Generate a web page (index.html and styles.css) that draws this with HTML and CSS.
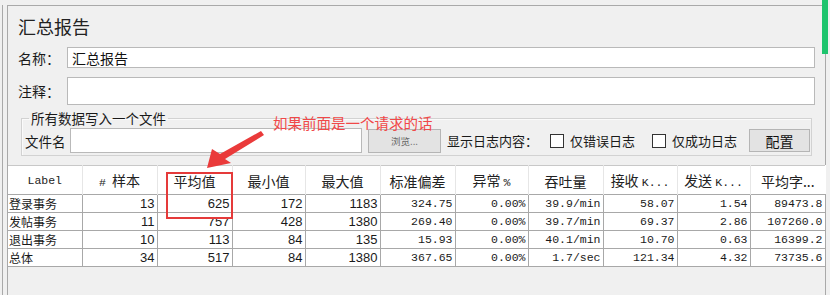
FILE: index.html
```html
<!DOCTYPE html>
<html lang="zh-CN">
<head>
    <meta charset="UTF-8">
    <title>汇总报告</title>
    <link rel="stylesheet" href="styles.css">
</head>
<body>
    <div class="frame">
        <div class="panel">
            <h1 class="title">汇总报告</h1>

            <div class="field-row name-row">
                <label class="field-label">名称：</label>
                <input class="text-input" type="text" value="汇总报告">
            </div>
            <div class="field-row comment-row">
                <label class="field-label">注释：</label>
                <input class="text-input tall" type="text">
            </div>

            <fieldset class="group">
                <legend>所有数据写入一个文件</legend>
                <div class="file-row">
                    <label class="file-label">文件名</label>
                    <input class="file-input" type="text">
                    <button class="btn browse">浏览...</button>
                    <span class="log-label">显示日志内容：</span>
                    <label class="check"><span class="box"></span>仅错误日志</label>
                    <label class="check"><span class="box"></span>仅成功日志</label>
                    <button class="btn config">配置</button>
                </div>
            </fieldset>

            <table class="summary">
                <colgroup>
                    <col style="width: 74px"><col style="width: 75px"><col style="width: 75px">
                    <col style="width: 73px"><col style="width: 75px"><col style="width: 75px">
                    <col style="width: 73px"><col style="width: 75px"><col style="width: 74px">
                    <col style="width: 73px"><col style="width: 75px">
                </colgroup>
                <thead>
                    <tr>
                        <th class="mono">Label</th>
                        <th><span class="mono">#</span>&nbsp; 样本</th>
                        <th>平均值</th>
                        <th>最小值</th>
                        <th>最大值</th>
                        <th>标准偏差</th>
                        <th>异常 <span class="mono">%</span></th>
                        <th>吞吐量</th>
                        <th>接收 <span class="mono">K...</span></th>
                        <th>发送 <span class="mono">K...</span></th>
                        <th>平均字...</th>
                    </tr>
                </thead>
                <tbody>
                    <tr>
                        <td class="name">登录事务</td><td>13</td><td>625</td><td>172</td><td>1183</td>
                        <td class="mono">324.75</td><td class="mono">0.00%</td><td class="mono">39.9/min</td>
                        <td class="mono">58.07</td><td class="mono">1.54</td><td class="mono">89473.8</td>
                    </tr>
                    <tr>
                        <td class="name">发帖事务</td><td>11</td><td>757</td><td>428</td><td>1380</td>
                        <td class="mono">269.40</td><td class="mono">0.00%</td><td class="mono">39.7/min</td>
                        <td class="mono">69.37</td><td class="mono">2.86</td><td class="mono">107260.0</td>
                    </tr>
                    <tr>
                        <td class="name">退出事务</td><td>10</td><td>113</td><td>84</td><td>135</td>
                        <td class="mono">15.93</td><td class="mono">0.00%</td><td class="mono">40.1/min</td>
                        <td class="mono">10.70</td><td class="mono">0.63</td><td class="mono">16399.2</td>
                    </tr>
                    <tr>
                        <td class="name">总体</td><td>34</td><td>517</td><td>84</td><td>1380</td>
                        <td class="mono">367.65</td><td class="mono">0.00%</td><td class="mono">1.7/sec</td>
                        <td class="mono">121.34</td><td class="mono">4.32</td><td class="mono">73735.6</td>
                    </tr>
                </tbody>
            </table>
        </div>
    </div>

    <!-- annotation layer -->
    <div class="scroll-mark"></div>
    <div class="note">如果前面是一个请求的话</div>
    <svg class="arrow" width="80" height="50" viewBox="200 125 80 50">
        <polygon points="207,168 212,149 220,154 261,131 264,135 225,159 231,163" fill="#ea3a3a"/>
    </svg>
    <div class="highlight"></div>
</body>
</html>
```

FILE: styles.css
```css
body {
    margin: 0;
    height: 295px;
    overflow: hidden;
    background-color: #f0f0f0;
    font-family: "Noto Sans CJK SC", "Liberation Sans", sans-serif;
    font-size: 14px;
    color: #1a1a1a;
    position: relative;
}
.frame {
    margin-left: 2px;
    padding-left: 4px;
    height: 295px;
    border-left: 1px solid #a9a9a9;
}
.panel {
    margin-top: 5px;
    height: 290px;
    width: 817px;
    border-top: 1px solid #a9a9a9;
    border-left: 1px solid #a9a9a9;
    border-right: 1px solid #a9a9a9;
}
.title {
    margin: 8px 0 0 10px;
    font-size: 18px;
    font-weight: normal;
    line-height: 24px;
    color: #222;
}
.field-row {
    display: flex;
    align-items: center;
    margin: 9px 10px 0 10px;
}
.field-label {
    width: 49px;
    flex-shrink: 0;
}
.text-input {
    flex: 1;
    height: 21px;
    box-sizing: border-box;
    border: 1px solid #b9b9b9;
    background: #fff;
    padding: 0 4px;
    font-family: inherit;
    font-size: 14px;
    color: #111;
    outline: none;
}
.text-input.tall {
    height: 28px;
}
.group {
    margin: 5px 17px 0 13px;
    padding: 2px 1px 2px 3px;
    border: 1px solid #d2d2d2;
    box-shadow: 1px 1px 0 #fafafa inset;
}
.group legend {
    margin-left: 4px;
    padding: 0 2px;
    font-size: 13.5px;
    line-height: 16px;
}
.file-row {
    display: flex;
    align-items: center;
    white-space: nowrap;
    font-size: 13px;
}
.file-row > * {
    flex-shrink: 0;
}
.file-label {
    width: 45px;
    font-size: 13.5px;
}
.file-input {
    width: 292px;
    height: 25px;
    box-sizing: border-box;
    border: 1px solid #b9b9b9;
    background: #fff;
    outline: none;
}
.btn {
    height: 24px;
    box-sizing: border-box;
    border: 1px solid #b5b5b5;
    background-color: #e3e3e3;
    font-family: inherit;
    padding: 0;
}
.browse {
    width: 73px;
    margin-left: 6px;
    font-size: 9.5px;
    color: #666;
}
.log-label {
    margin-left: 6px;
}
.check {
    display: flex;
    align-items: center;
    margin-left: 12px;
}
.check .box {
    width: 12px;
    height: 12px;
    border: 1px solid #333;
    background: #fff;
    margin-right: 6px;
}
.check + .check {
    margin-left: 17px;
}
.config {
    width: 61px;
    height: 23px;
    margin-left: 12px;
    font-size: 14px;
    color: #111;
}
.summary {
    margin-top: 9px;
    width: 817px;
    table-layout: fixed;
    border-collapse: collapse;
    background: #fff;
    font-family: "Liberation Sans", sans-serif;
    font-size: 13px;
    border-top: 1px solid #c8c8c8;
}
.summary th {
    height: 26px;
    padding: 2px 0 0 0;
    font-family: "Noto Sans CJK SC", sans-serif;
    font-weight: normal;
    font-size: 14px;
    line-height: 18px;
    color: #222;
    border-left: 1px solid #e6e6e6;
    white-space: nowrap;
    overflow: hidden;
}
.summary th:first-child {
    border-left: none;
}
.summary td {
    height: 17px;
    padding: 0 2px 0 0;
    line-height: 17px;
    text-align: right;
    border: 1px solid #a8a8a8;
    white-space: nowrap;
    overflow: hidden;
}
.summary td.name {
    text-align: left;
    padding-left: 1px;
    border-left: none;
    font-family: "Noto Sans CJK SC", sans-serif;
    font-size: 12px;
}
.summary .mono {
    font-family: "Liberation Mono", monospace;
    font-size: 11.5px;
}
.summary th.mono {
    font-size: 11.5px;
}
.scroll-mark {
    position: absolute;
    left: 822px;
    top: 0;
    width: 6px;
    height: 54px;
    background-color: #1ec46d;
}
.note {
    position: absolute;
    left: 273px;
    top: 113px;
    font-size: 14.5px;
    line-height: 20px;
    color: #f04848;
    white-space: nowrap;
}
.arrow {
    position: absolute;
    left: 200px;
    top: 125px;
}
.highlight {
    position: absolute;
    left: 166px;
    top: 172px;
    width: 63px;
    height: 43px;
    border: 2.5px solid #e53a3a;
}
```
